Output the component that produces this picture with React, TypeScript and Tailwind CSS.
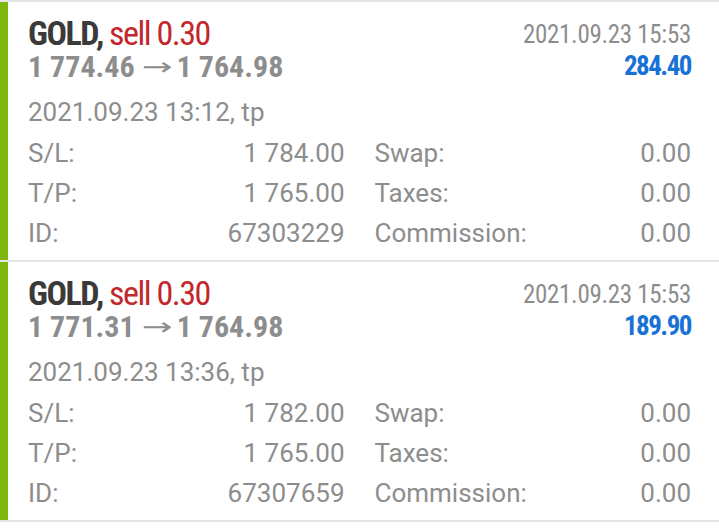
import React from 'react';

interface Deal {
  symbol: string;
  side: string;
  openPrice: string;
  closePrice: string;
  openTime: string;
  closeTime: string;
  profit: string;
  sl: string;
  tp: string;
  id: string;
}

const deals: Deal[] = [
  {
    symbol: 'GOLD',
    side: 'sell 0.30',
    openPrice: '1 774.46',
    closePrice: '1 764.98',
    openTime: '2021.09.23 13:12, tp',
    closeTime: '2021.09.23 15:53',
    profit: '284.40',
    sl: '1 784.00',
    tp: '1 765.00',
    id: '67303229',
  },
  {
    symbol: 'GOLD',
    side: 'sell 0.30',
    openPrice: '1 771.31',
    closePrice: '1 764.98',
    openTime: '2021.09.23 13:36, tp',
    closeTime: '2021.09.23 15:53',
    profit: '189.90',
    sl: '1 782.00',
    tp: '1 765.00',
    id: '67307659',
  },
];

const DealCard: React.FC<{ deal: Deal }> = ({ deal }) => {
  const rows = [
    ['S/L:', deal.sl, 'Swap:', '0.00'],
    ['T/P:', deal.tp, 'Taxes:', '0.00'],
    ['ID:', deal.id, 'Commission:', '0.00'],
  ];

  return (
    <div className="flex h-[260px] border-b-2 border-[#e6e6e6] bg-white">
      <div className="w-2 shrink-0 bg-[#7cb60e]" />
      <div className="flex-1 pl-5 pr-7 pt-[14px]">
        <div className="flex items-start justify-between font-['Roboto_Condensed','Roboto',sans-serif] [font-stretch:condensed]">
          <div>
            <div className="h-[34px] text-[34px] font-bold leading-[34px] tracking-[-1.5px] text-[#3a3a3a]">
              {deal.symbol}, <span className="font-normal text-[#c3262b]">{deal.side}</span>
            </div>
            <div className="flex h-[34px] items-center text-[30px] font-bold leading-[32px] text-[#8d8d8d]">
              <span>{deal.openPrice}</span>
              <span className="ml-[13px] mr-[11px] inline-block scale-x-[1.7] font-['DejaVu_Sans',sans-serif] text-[24px] font-normal leading-[24px]">
                →
              </span>
              <span>{deal.closePrice}</span>
            </div>
          </div>
          <div className="pt-[4px] text-right">
            <div className="text-[25px] leading-[30px] tracking-[-0.3px] text-[#8d8d8d]">{deal.closeTime}</div>
            <div className="text-[27px] font-bold leading-[32px] tracking-[-1.5px] text-[#1872d6]">{deal.profit}</div>
          </div>
        </div>
        <div className="mt-[12px] text-[26px] leading-[32px] text-[#8d8d8d]">{deal.openTime}</div>
        <div className="mt-[5px] grid grid-cols-[1fr_1fr] gap-x-[30px] text-[26px] text-[#8d8d8d]">
          {rows.map((r, i) => (
            <React.Fragment key={i}>
              <div className="flex h-10 items-center justify-between leading-[40px]">
                <span>{r[0]}</span>
                <span>{r[1]}</span>
              </div>
              <div className="flex h-10 items-center justify-between leading-[40px]">
                <span>{r[2]}</span>
                <span>{r[3]}</span>
              </div>
            </React.Fragment>
          ))}
        </div>
      </div>
    </div>
  );
};

export default function App() {
  return (
    <div className="h-[528px] w-[719px] overflow-hidden bg-white font-['Roboto',sans-serif]">
      <div className="border-t-2 border-[#e6e6e6]">
        {deals.map((d, i) => (
          <DealCard key={i} deal={d} />
        ))}
      </div>
    </div>
  );
}
